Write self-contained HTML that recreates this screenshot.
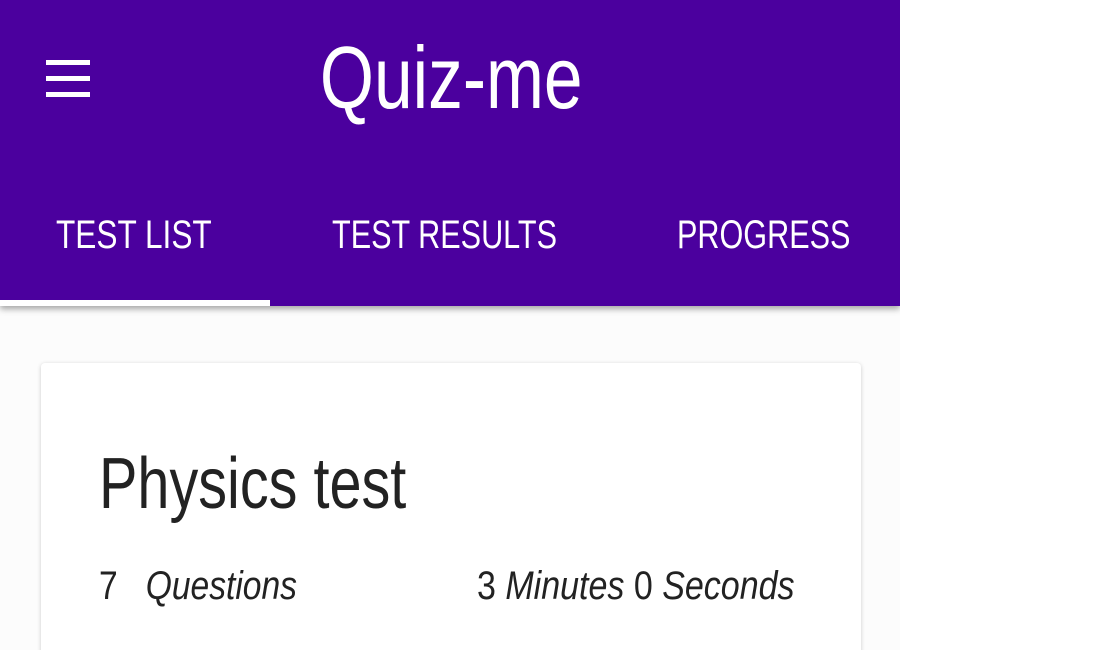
<!DOCTYPE html>
<html><head><style>
html,body{margin:0;padding:0;width:1110px;height:650px;overflow:hidden;background:#fff;font-family:"Liberation Sans",sans-serif;}
.wrap{position:absolute;left:0;top:0;width:900px;height:650px;background:#fcfcfc;overflow:hidden;}
.hdr{position:absolute;left:0;top:0;width:900px;height:306px;background:#4b009e;box-shadow:0 3px 6px rgba(0,0,0,.35);z-index:2;}
.bar{position:absolute;left:46px;width:44px;height:5px;background:#fff;}
.title{position:absolute;left:0;width:900px;text-align:center;top:28px;font-size:88px;color:#fff;line-height:100px;}
.title span{display:inline-block;transform:scaleX(0.79);transform-origin:center;margin-left:2px;}
.c{display:inline-block;transform:scaleX(0.79);transform-origin:left;white-space:nowrap;}
.tab{position:absolute;top:210px;font-size:40px;color:#fff;line-height:50px;}
.ul{position:absolute;left:0;top:300px;width:270px;height:6px;background:#fff;}
.card{position:absolute;left:41px;top:363px;width:820px;height:300px;background:#fff;border-radius:4px;box-shadow:0 1px 4px rgba(0,0,0,.2);}
.pt{position:absolute;left:58px;top:76px;font-size:72px;color:#222;line-height:90px;}
.row{position:absolute;top:198px;font-size:40px;color:#222;line-height:50px;}
i{font-style:italic;}
</style></head><body>
<div class="wrap">
<div class="hdr">
<div class="bar" style="top:60px"></div>
<div class="bar" style="top:76px"></div>
<div class="bar" style="top:92px"></div>
<div class="title"><span>Quiz-me</span></div>
<div class="tab" style="left:56px"><span class="c">TEST LIST</span></div>
<div class="tab" style="left:332px"><span class="c" style="transform:scaleX(0.765)">TEST RESULTS</span></div>
<div class="tab" style="left:677px"><span class="c" style="transform:scaleX(0.765)">PROGRESS</span></div>
<div class="ul"></div>
</div>
<div class="card">
<div class="pt"><span class="c" style="transform:scaleX(0.8)">Physics test</span></div>
<div class="row" style="left:58px"><span class="c" style="transform:scaleX(0.84)">7&nbsp;&nbsp; <i>Questions</i></span></div>
<div class="row" style="left:436px"><span class="c" style="transform:scaleX(0.85)">3 <i>Minutes</i> 0 <i>Seconds</i></span></div>
</div>
</div>
</body></html>
